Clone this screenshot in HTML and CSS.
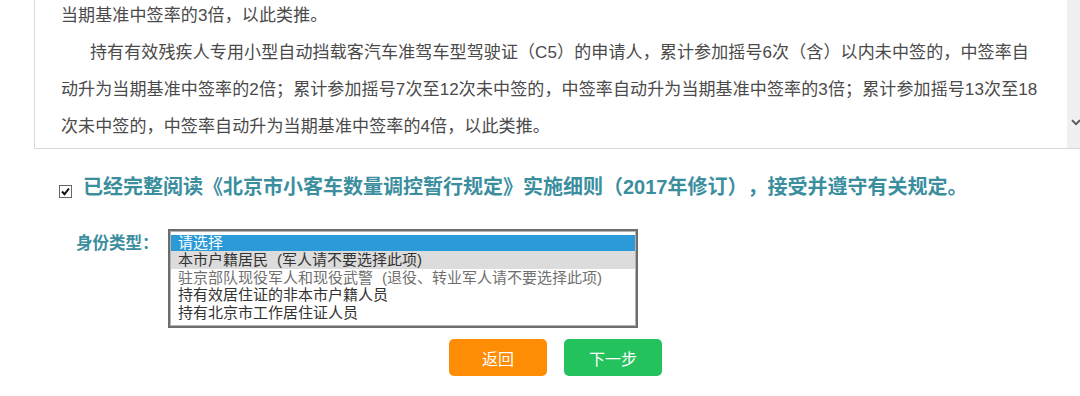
FILE: index.html
```html
<!DOCTYPE html>
<html lang="zh-CN">
<head>
<meta charset="utf-8">
<title>摇号申请</title>
<link rel="stylesheet" href="styles.css">
</head>
<body>
<div class="article">
  <div class="article-body">
    <p class="para">当期基准中签率的3倍，以此类推。</p>
    <p class="para indent">持有有效残疾人专用小型自动挡载客汽车准驾车型驾驶证（C5）的申请人，累计参加摇号6次（含）以内未中签的，中签率自动升为当期基准中签率的2倍；累计参加摇号7次至12次未中签的，中签率自动升为当期基准中签率的3倍；累计参加摇号13次至18次未中签的，中签率自动升为当期基准中签率的4倍，以此类推。</p>
  </div>
  <div class="scrollbar">
    <svg class="chev" width="10" height="7" viewBox="0 0 10 7"><path d="M1 1.2 L5 5.2 L9 1.2" fill="none" stroke="#555" stroke-width="1.8"/></svg>
  </div>
</div>

<div class="agree">
  <span class="checkbox"><svg width="11" height="11" viewBox="0 0 11 11"><path d="M2 5.5 L4.5 8.2 L9 2.5" fill="none" stroke="#111" stroke-width="2"/></svg></span>
  <span class="agree-text">已经完整阅读《北京市小客车数量调控暂行规定》实施细则（2017年修订），接受并遵守有关规定。</span>
</div>

<div class="identity">
  <span class="label">身份类型：</span>
  <div class="listbox">
    <div class="opt first selected">请选择</div>
    <div class="opt hover">本市户籍居民<span class="note">(军人请不要选择此项)</span></div>
    <div class="opt muted">驻京部队现役军人和现役武警<span class="note">(退役、转业军人请不要选择此项)</span></div>
    <div class="opt">持有效居住证的非本市户籍人员</div>
    <div class="opt">持有北京市工作居住证人员</div>
  </div>
</div>

<div class="actions">
  <a class="btn btn-back">返回</a>
  <a class="btn btn-next">下一步</a>
</div>
</body>
</html>
```

FILE: styles.css
```css
html, body {
  margin: 0;
  padding: 0;
  background: #fff;
  overflow: hidden;
}
body {
  width: 1080px;
  height: 396px;
  font-family: "Liberation Sans", "Noto Sans CJK SC", sans-serif;
  text-spacing-trim: space-all;
}

.article {
  display: flex;
  margin-top: -3.5px;
  margin-left: 34px;
  width: 1049px;
  border-left: 1px solid #d9d9d9;
  border-bottom: 1px solid #d9d9d9;
}
.article-body {
  flex: 1;
  padding: 0 24px 3px 26px;
}
.para {
  margin: 0;
  width: 981px;
  font-size: 17px;
  line-height: 37px;
  letter-spacing: 0.12px;
  color: #4a4a4a;
}
.indent {
  text-indent: 29px;
}
.scrollbar {
  width: 17px;
  background: #f0f0f0;
  display: flex;
  flex-direction: column;
  justify-content: flex-end;
  align-items: center;
  padding-bottom: 22px;
  box-sizing: border-box;
}
.chev {
  display: block;
}

.agree {
  display: flex;
  align-items: flex-start;
  margin-top: 26.5px;
  padding-left: 59px;
}
.checkbox {
  width: 11px;
  height: 11px;
  margin-top: 10px;
  border: 1px solid #666;
  background: #fff;
  display: flex;
}
.agree-text {
  margin-left: 11px;
  font-size: 20px;
  line-height: 24px;
  font-weight: bold;
  color: #3a8e9e;
}

.identity {
  display: flex;
  align-items: flex-start;
  margin-top: 30px;
  padding-left: 76px;
}
.label {
  width: 92px;
  font-size: 16.5px;
  line-height: 28px;
  font-weight: bold;
  color: #3a8e9e;
}
.listbox {
  width: 466px;
  height: 91px;
  border: 2px solid #6d6d6d;
  box-shadow: inset 0 0 0 1px #b4b4b4;
  padding-top: 4px;
  box-sizing: content-box;
  background: #fff;
}
.opt {
  height: 17.5px;
  line-height: 17.5px;
  padding-left: 7px;
  margin: 0 1px;
  font-size: 15px;
  color: #333;
  white-space: nowrap;
}
.opt.first {
  height: 16px;
  line-height: 16px;
}
.opt.selected {
  background: #2a9ad9;
  color: #fff;
}
.opt.hover {
  background: #dcdcdc;
}
.opt.muted {
  color: #707070;
}
.note {
  margin-left: 9px;
}

.actions {
  display: flex;
  gap: 17px;
  margin-top: 11px;
  padding-left: 449px;
}
.btn {
  width: 98px;
  height: 37px;
  border-radius: 5px;
  display: flex;
  align-items: center;
  justify-content: center;
  font-size: 16px;
  color: #fff;
  text-decoration: none;
  font-family: "Noto Sans CJK SC", sans-serif;
}
.btn-back {
  background: #ff8c05;
}
.btn-next {
  background: #24c25c;
}
```
